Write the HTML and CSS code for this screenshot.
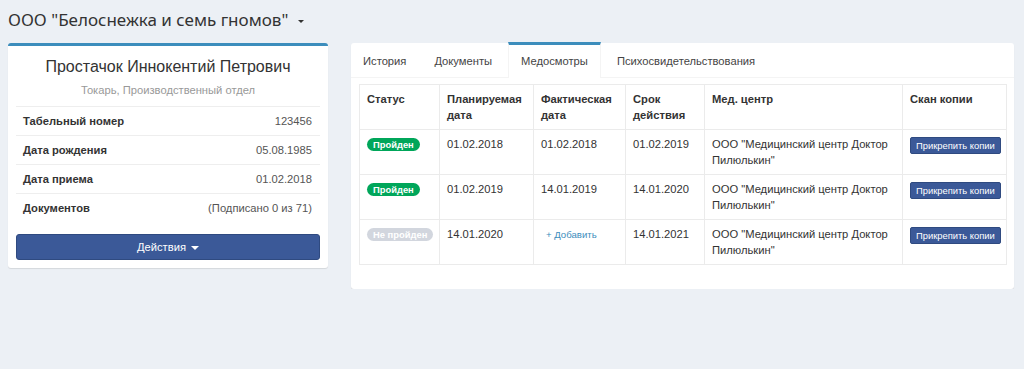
FILE: index.html
```html
<!DOCTYPE html>
<html>
<head>
	<meta charset="utf-8">
	<title>Медосмотры</title>
	<link rel="stylesheet" href="styles.css">
</head>
<body>
<div class="page">
	<div class="org-title">ООО "Белоснежка и семь гномов" <span class="caret caret-dark"></span></div>

	<div class="row">
		<div class="box box-profile">
			<div class="profile-name">Простачок Иннокентий Петрович</div>
			<div class="profile-sub">Токарь, Производственный отдел</div>
			<ul class="list">
				<li><b>Табельный номер</b><span>123456</span></li>
				<li><b>Дата рождения</b><span>05.08.1985</span></li>
				<li><b>Дата приема</b><span>01.02.2018</span></li>
				<li><b>Документов</b><span>(Подписано 0 из 71)</span></li>
			</ul>
			<div class="btn-actions">Действия <span class="caret"></span></div>
		</div>

		<div class="box box-tabs">
			<ul class="tabs">
				<li>История</li>
				<li>Документы</li>
				<li class="active">Медосмотры</li>
				<li>Психосвидетельствования</li>
			</ul>
			<div class="tab-content">
				<table class="grid">
					<colgroup>
						<col style="width:80px">
						<col style="width:94px">
						<col style="width:92px">
						<col style="width:79px">
						<col style="width:198px">
						<col style="width:104px">
					</colgroup>
					<tr>
						<th>Статус</th>
						<th>Планируемая дата</th>
						<th>Фактическая дата</th>
						<th>Срок действия</th>
						<th>Мед. центр</th>
						<th>Скан копии</th>
					</tr>
					<tr>
						<td><span class="badge green">Пройден</span></td>
						<td>01.02.2018</td>
						<td>01.02.2018</td>
						<td>01.02.2019</td>
						<td>ООО "Медицинский центр Доктор Пилюлькин"</td>
						<td><span class="btn-xs">Прикрепить копии</span></td>
					</tr>
					<tr>
						<td><span class="badge green">Пройден</span></td>
						<td>01.02.2019</td>
						<td>14.01.2019</td>
						<td>14.01.2020</td>
						<td>ООО "Медицинский центр Доктор Пилюлькин"</td>
						<td><span class="btn-xs">Прикрепить копии</span></td>
					</tr>
					<tr>
						<td><span class="badge grey">Не пройден</span></td>
						<td>14.01.2020</td>
						<td><span class="link-add">+ Добавить</span></td>
						<td>14.01.2021</td>
						<td>ООО "Медицинский центр Доктор Пилюлькин"</td>
						<td><span class="btn-xs">Прикрепить копии</span></td>
					</tr>
				</table>
			</div>
		</div>
	</div>
</div>
</body>
</html>
```

FILE: styles.css
```css
* {
	box-sizing: border-box;
}

body {
	margin: 0;
	padding: 0;
	background: #ecf0f5;
	font-family: "Liberation Sans", Arial, sans-serif;
	font-size: 11.2px;
	line-height: 16px;
	color: #333;
}

.page {
	padding: 0 10px 0 8px;
}

.org-title {
	font-family: "Noto Sans", sans-serif;
	font-size: 17px;
	line-height: 24px;
	padding-top: 8px;
	height: 43px;
	color: #333;
}

.caret {
	display: inline-block;
	width: 0;
	height: 0;
	border-top: 4px solid #fff;
	border-left: 4px solid transparent;
	border-right: 4px solid transparent;
	vertical-align: middle;
	margin-left: 2px;
}

.caret-dark {
	border-top-color: #333;
	border-top-width: 3px;
	border-left-width: 3px;
	border-right-width: 3px;
	margin-left: 5px;
}

.row {
	display: flex;
	align-items: flex-start;
	gap: 23px;
}

.box {
	background: #fff;
	border-radius: 3px;
	box-shadow: 0 1px 1px rgba(0, 0, 0, 0.1);
}

.box-profile {
	width: 320px;
	border-top: 3px solid #3c8dbc;
	padding: 8px 8px 8px 8px;
}

.profile-name {
	margin-top: 2px;
	font-size: 16px;
	line-height: 22px;
	text-align: center;
	color: #333;
}

.profile-sub {
	margin: 4px 0 8px;
	text-align: center;
	color: #999;
}

.list {
	list-style: none;
	margin: 0;
	padding: 0;
}

.list li {
	display: flex;
	justify-content: space-between;
	height: 29px;
	padding: 6px 8px 6px 7px;
	border-top: 1px solid #eee;
}

.list li span {
	color: #555;
}

.btn-actions {
	margin-top: 12px;
	height: 26px;
	line-height: 24px;
	text-align: center;
	color: #fff;
	background: #3b5998;
	border: 1px solid #2f4a80;
	border-radius: 3px;
}

.box-tabs {
	width: 663px;
}

.tabs {
	display: flex;
	gap: 4px;
	list-style: none;
	margin: 0;
	padding: 0;
	border-bottom: 1px solid #f4f4f4;
}

.tabs li {
	margin-top: -1px;
	margin-bottom: -1px;
	padding: 8px 12px 9px;
	border-top: 3px solid transparent;
	color: #444;
}

.tabs li.active {
	border-top-color: #3c8dbc;
	border-left: 1px solid #f4f4f4;
	border-right: 1px solid #f4f4f4;
	background: #fff;
	padding: 8px 12px 9px;
}

.tab-content {
	padding: 6px 8px 8px;
}

.grid {
	width: 647px;
	table-layout: fixed;
	border-collapse: collapse;
	margin-bottom: 16px;
}

.grid th,
.grid td {
	border: 1px solid #ebebeb;
	padding: 6px 6px 6px 7px;
	text-align: left;
	vertical-align: top;
}

.grid th {
	font-weight: bold;
}

.badge {
	display: inline-block;
	vertical-align: top;
	padding: 0 6px;
	margin-top: 2px;
	font-size: 9.4px;
	font-weight: bold;
	line-height: 13px;
	color: #fff;
	border-radius: 8px;
	white-space: nowrap;
}

.green {
	background: #00a65a;
}

.grey {
	background: #d2d6de;
}

.link-add {
	display: inline-block;
	vertical-align: top;
	padding-left: 5px;
	margin-top: 2px;
	font-size: 9.6px;
	line-height: 14px;
	color: #3c8dbc;
}

.btn-xs {
	display: inline-block;
	vertical-align: top;
	padding: 0 5px;
	margin-top: 1px;
	font-size: 9.4px;
	line-height: 15px;
	color: #fff;
	background: #3b5998;
	border: 1px solid #2f4a80;
	border-radius: 2px;
	white-space: nowrap;
}
```
